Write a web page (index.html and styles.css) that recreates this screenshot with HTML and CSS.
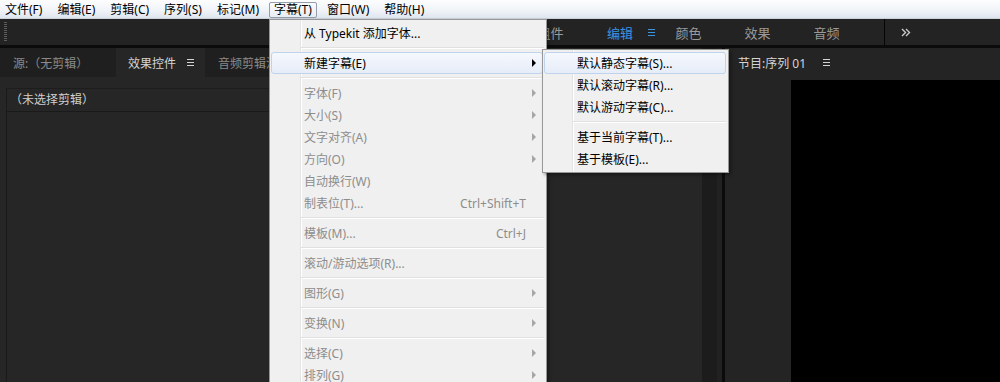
FILE: index.html
```html
<!DOCTYPE html>
<html lang="zh-CN">
<head>
    <meta charset="UTF-8">
    <title>字幕菜单</title>
    <link rel="stylesheet" href="styles.css">
</head>
<body>
    <div class="menubar">
        <span class="menubar-item">文件(F)</span>
        <span class="menubar-item">编辑(E)</span>
        <span class="menubar-item">剪辑(C)</span>
        <span class="menubar-item">序列(S)</span>
        <span class="menubar-item">标记(M)</span>
        <span class="menubar-item is-open">字幕(T)</span>
        <span class="menubar-item">窗口(W)</span>
        <span class="menubar-item">帮助(H)</span>
    </div>

    <div class="toolbar">
        <div class="grip"></div>
        <div class="workspaces">
            <span class="ws-tab">组件</span>
            <span class="ws-tab is-active"><span>编辑</span>
                <svg class="ws-menu" width="7" height="7" viewBox="0 0 7 7"><path d="M0 .5h7M0 3.5h7M0 6.5h7" stroke="currentColor"/></svg>
            </span>
            <span class="ws-tab">颜色</span>
            <span class="ws-tab">效果</span>
            <span class="ws-tab">音频</span>
            <span class="ws-divider"></span>
            <svg class="ws-more" width="10" height="9" viewBox="0 0 10 9"><path d="M1 1l3.5 3.5L1 8M5 1l3.5 3.5L5 8" fill="none" stroke="currentColor" stroke-width="1.4"/></svg>
        </div>
    </div>

    <div class="panels">
        <div class="panel panel-left">
            <div class="tabs">
                <div class="tab tab-source">源:（无剪辑）</div>
                <div class="tab tab-active"><span>效果控件</span>
                    <svg class="tab-menu" width="7" height="7" viewBox="0 0 7 7"><path d="M0 .5h7M0 3.5h7M0 6.5h7" stroke="currentColor"/></svg>
                </div>
                <div class="tab">音频剪辑混合器</div>
            </div>
            <div class="panel-body">
                <div class="clip-box">
                    <div class="clip-header">（未选择剪辑）</div>
                </div>
            </div>
        </div>

        <div class="panel panel-mid">
            <div class="mid-body"></div>
            <div class="mid-scroll"></div>
            <div class="mid-edge"></div>
        </div>

        <div class="panel panel-right">
            <div class="tabs tabs-program">
                <div class="tab tab-active tab-program"><span>节目:序列 01</span>
                    <svg class="tab-menu" width="7" height="7" viewBox="0 0 7 7"><path d="M0 .5h7M0 3.5h7M0 6.5h7" stroke="currentColor"/></svg>
                </div>
            </div>
            <div class="monitor">
                <div class="screen"></div>
            </div>
        </div>
    </div>

    <!-- 字幕(T) 下拉菜单 -->
    <div class="dropdown">
        <div class="menu-item">从 Typekit 添加字体...</div>
        <div class="menu-sep"></div>
        <div class="menu-item is-hot">新建字幕(E)<span class="arrow-cell"><i class="arrow"></i></span></div>
        <div class="menu-sep"></div>
        <div class="menu-item is-disabled">字体(F)<span class="arrow-cell"><i class="arrow"></i></span></div>
        <div class="menu-item is-disabled">大小(S)<span class="arrow-cell"><i class="arrow"></i></span></div>
        <div class="menu-item is-disabled">文字对齐(A)<span class="arrow-cell"><i class="arrow"></i></span></div>
        <div class="menu-item is-disabled">方向(O)<span class="arrow-cell"><i class="arrow"></i></span></div>
        <div class="menu-item is-disabled">自动换行(W)</div>
        <div class="menu-item is-disabled">制表位(T)...<span class="shortcut">Ctrl+Shift+T</span><span class="arrow-cell"></span></div>
        <div class="menu-sep"></div>
        <div class="menu-item is-disabled">模板(M)...<span class="shortcut">Ctrl+J</span><span class="arrow-cell"></span></div>
        <div class="menu-sep"></div>
        <div class="menu-item is-disabled">滚动/游动选项(R)...</div>
        <div class="menu-sep"></div>
        <div class="menu-item is-disabled">图形(G)<span class="arrow-cell"><i class="arrow"></i></span></div>
        <div class="menu-sep"></div>
        <div class="menu-item is-disabled">变换(N)<span class="arrow-cell"><i class="arrow"></i></span></div>
        <div class="menu-sep"></div>
        <div class="menu-item is-disabled">选择(C)<span class="arrow-cell"><i class="arrow"></i></span></div>
        <div class="menu-item is-disabled">排列(G)<span class="arrow-cell"><i class="arrow"></i></span></div>
    </div>

    <!-- 新建字幕 子菜单 -->
    <div class="submenu">
        <div class="menu-item is-hot">默认静态字幕(S)...</div>
        <div class="menu-item">默认滚动字幕(R)...</div>
        <div class="menu-item">默认游动字幕(C)...</div>
        <div class="menu-sep"></div>
        <div class="menu-item">基于当前字幕(T)...</div>
        <div class="menu-item">基于模板(E)...</div>
    </div>
</body>
</html>
```

FILE: styles.css
```css
* {
    box-sizing: border-box;
}
body {
    margin: 0;
    width: 1000px;
    height: 382px;
    overflow: hidden;
    position: relative;
    background: #0b0b0b;
    font-family: "Noto Sans", "Noto Sans CJK SC", sans-serif;
    font-size: 12px;
}

/* 顶部菜单栏 */
.menubar {
    height: 19px;
    display: flex;
    align-items: flex-end;
    gap: 5px;
    background: linear-gradient(#fdfdfe, #f1f4f8 55%, #dfe5ef);
    border-bottom: 1px solid #cbd1db;
}
.menubar-item {
    height: 16px;
    line-height: 14px;
    padding: 0 4px;
    border: 1px solid transparent;
    border-radius: 2px;
    color: #000;
    white-space: nowrap;
}
.menubar-item.is-open {
    border-color: #959daa;
    background: linear-gradient(#fafbfc, #e8ecf2);
}

/* 工作区栏 */
.toolbar {
    height: 26px;
    display: flex;
    align-items: center;
    background: #232323;
}
.grip {
    width: 3px;
    height: 20px;
    margin-left: 4px;
    background: repeating-linear-gradient(#5c5c5c 0 1px, transparent 1px 2px);
}
.workspaces {
    display: flex;
    align-items: center;
    height: 100%;
    margin-left: 509px;
    color: #9a9a9a;
    font-size: 13px;
    white-space: nowrap;
}
.ws-tab {
    width: 69px;
    text-align: center;
    flex-shrink: 0;
}
.ws-tab.is-active {
    display: flex;
    align-items: center;
    padding-left: 22px;
    color: #3893e2;
}
.ws-menu {
    flex-shrink: 0;
    margin-left: 15px;
    margin-right: -2px;
}
.ws-divider {
    width: 1px;
    height: 100%;
    margin-left: 23px;
    background: #050505;
}
.ws-more {
    margin-left: 16px;
    color: #c8c8c8;
}

/* 面板 */
.panels {
    display: flex;
    height: 334px;
    margin-top: 3px;
}
.panel {
    display: flex;
    flex-direction: column;
}
.panel-left {
    width: 546px;
    background: #262626;
}
.tabs {
    display: flex;
    height: 29px;
    background: #1f1f1f;
}
.tab {
    display: flex;
    align-items: center;
    padding: 0 13px;
    color: #8a8a8a;
    white-space: nowrap;
}
.tab-source {
    width: 116px;
}
.tab-active {
    width: 89px;
    padding-left: 12px;
    background: #262626;
    color: #d4d4d4;
}
.tab-menu {
    margin-left: 11px;
    flex-shrink: 0;
}
.panel-body {
    flex: 1;
    padding: 11px 0 0 6px;
}
.clip-box {
    height: 100%;
    border-left: 1px solid #1a1a1a;
    border-top: 1px solid #1d1d1d;
}
.clip-header {
    height: 23px;
    line-height: 22px;
    padding-left: 3px;
    border-bottom: 1px solid #1a1a1a;
    color: #cfcfcf;
}

.panel-mid {
    width: 176px;
    flex-direction: row;
}
.mid-body {
    flex: 1;
    background: #262626;
}
.mid-scroll {
    width: 15px;
    background: #1c1c1c;
}
.mid-edge {
    width: 5px;
    background: #212121;
}

.panel-right {
    flex: 1;
    margin-left: 3px;
    background: #242424;
}
.tabs-program {
    background: #242424;
}
.tab-program {
    width: auto;
    padding-left: 13px;
    background: #242424;
}
.tab-program .tab-menu {
    margin-left: 17px;
}
.monitor {
    flex: 1;
    padding: 3px 0 0 66px;
}
.screen {
    height: 100%;
    background: #000;
}

/* 下拉菜单 */
.dropdown, .submenu {
    position: absolute;
    padding: 2px 0;
    background-color: #f0f0f0;
    border: 1px solid #979797;
    box-shadow: 2px 2px 3px rgba(0, 0, 0, 0.35);
}
.dropdown {
    top: 19px;
    left: 269px;
    width: 278px;
    height: 380px;
    background-image: linear-gradient(to right, transparent 30px, #e2e3e3 30px, #e2e3e3 31px, #fff 31px, #fff 32px, transparent 32px);
}
.submenu {
    top: 49px;
    left: 542px;
    width: 187px;
    background-image: linear-gradient(to right, transparent 29px, #e2e3e3 29px, #e2e3e3 30px, #fff 30px, #fff 31px, transparent 31px);
}
.menu-item {
    display: flex;
    align-items: center;
    height: 22px;
    margin: 0 3px 0 1px;
    padding-left: 32px;
    border: 1px solid transparent;
    border-radius: 3px;
    color: #000;
    white-space: nowrap;
}
.submenu .menu-item {
    margin-right: 2px;
}
.menu-item.is-disabled {
    color: #8d8d8d;
}
.menu-item.is-hot {
    border-color: #c0d3ec;
    background: linear-gradient(#f5f8fd, #e6edf8);
}
.shortcut {
    margin-left: auto;
}
.arrow-cell {
    width: 16px;
    margin-left: auto;
    display: flex;
    justify-content: center;
}
.shortcut + .arrow-cell {
    margin-left: 0;
}
.arrow {
    width: 0;
    height: 0;
    border-left: 4px solid #000;
    border-top: 4px solid transparent;
    border-bottom: 4px solid transparent;
}
.is-disabled .arrow {
    border-left-color: #a6a6a6;
}
.menu-sep {
    height: 2px;
    margin: 3px 2px 3px 31px;
    border-top: 1px solid #e0e0e0;
    border-bottom: 1px solid #fff;
}
.submenu .menu-sep {
    margin-left: 30px;
}
```
